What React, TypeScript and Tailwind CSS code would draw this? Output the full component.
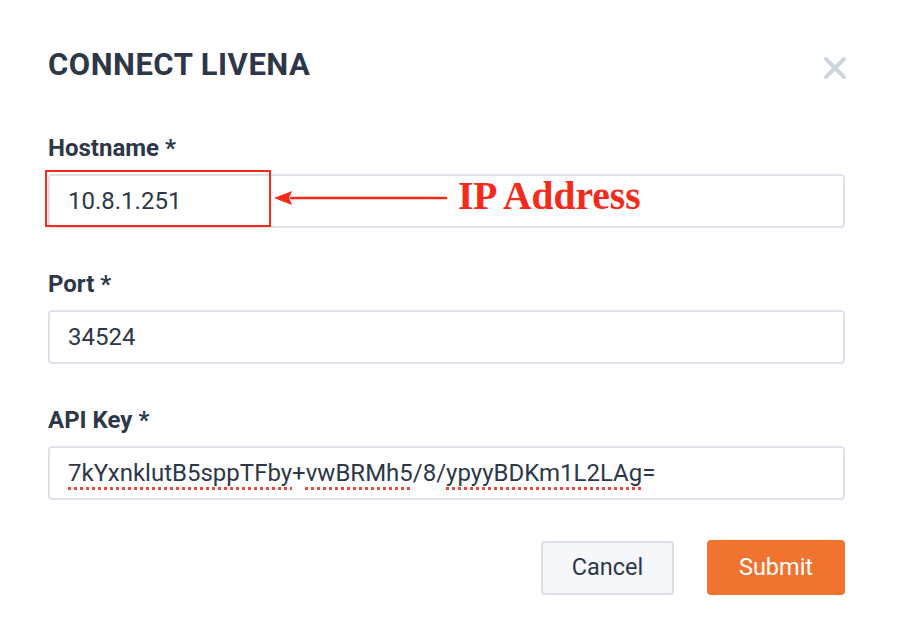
import React from "react";

const font = { fontFamily: "Roboto, 'Liberation Sans', sans-serif" };

function Field({ label, children }: { label: string; children: React.ReactNode }) {
  return (
    <div className="flex flex-col">
      <div className="text-[24px] font-bold leading-[28px] text-[#2d3748]">{label}</div>
      <div className="mt-[12px] flex h-[54px] items-center rounded-[4px] border-2 border-[#dde2ea] bg-white pl-[18px] text-[24px] text-[#2d3748]">
        {children}
      </div>
    </div>
  );
}

const sp = "underline decoration-dotted decoration-[#f0483a] decoration-[3px] underline-offset-[6px]";

export default function App() {
  return (
    <div className="relative h-[638px] w-[906px] overflow-hidden bg-white pl-[48px] pr-[61px] pt-[46px]" style={font}>
      <div className="flex h-[38px] items-start justify-between">
        <div className="text-[31px] font-bold leading-[38px] tracking-[0.5px] text-[#2d3748]">CONNECT LIVENA</div>
        <svg className="-mr-[2px] mt-[10px]" width="24" height="24" viewBox="0 0 24 24">
          <path d="M3 3 L21 21 M21 3 L3 21" stroke="#cfd5df" strokeWidth="4" strokeLinecap="round" fill="none" />
        </svg>
      </div>

      <div className="mt-[50px] flex flex-col gap-[42px]">
        <Field label="Hostname *">10.8.1.251</Field>
        <Field label="Port *">34524</Field>
        <Field label="API Key *">
          <span>
            <span className={sp}>7kYxnklutB5sppTFby</span>+<span className={sp}>vwBRMh5</span>/8/<span className={sp}>ypyyBDKm1L2LAg</span>=
          </span>
        </Field>
      </div>

      <div className="mt-[41px] flex items-start justify-end gap-[33px]">
        <button className="h-[54px] w-[133px] rounded-[4px] border-2 border-[#d9dee7] bg-[#f5f7fb] text-[23.5px] text-[#2d3748]">
          Cancel
        </button>
        <button className="-mt-[1px] h-[55px] w-[138px] rounded-[4px] bg-[#f07330] text-[23.5px] text-white">
          Submit
        </button>
      </div>

      {/* annotation */}
      <div className="absolute left-[45px] top-[170px] h-[57px] w-[226px] border-2 border-[#f52a1b]" />
      <svg className="absolute left-[272px] top-[189px]" width="178" height="18" viewBox="0 0 178 18">
        <path d="M18 9 L175 9" stroke="#f52a1b" strokeWidth="2.5" />
        <path d="M2 9 L20 2 L17 9 L20 16 Z" fill="#f52a1b" />
      </svg>
      <div
        className="absolute left-[458px] top-[177px] text-[39.5px] font-bold leading-[39px] text-[#f52a1b]"
        style={{ fontFamily: "'Liberation Serif', 'Times New Roman', serif" }}
      >
        IP Address
      </div>
    </div>
  );
}
